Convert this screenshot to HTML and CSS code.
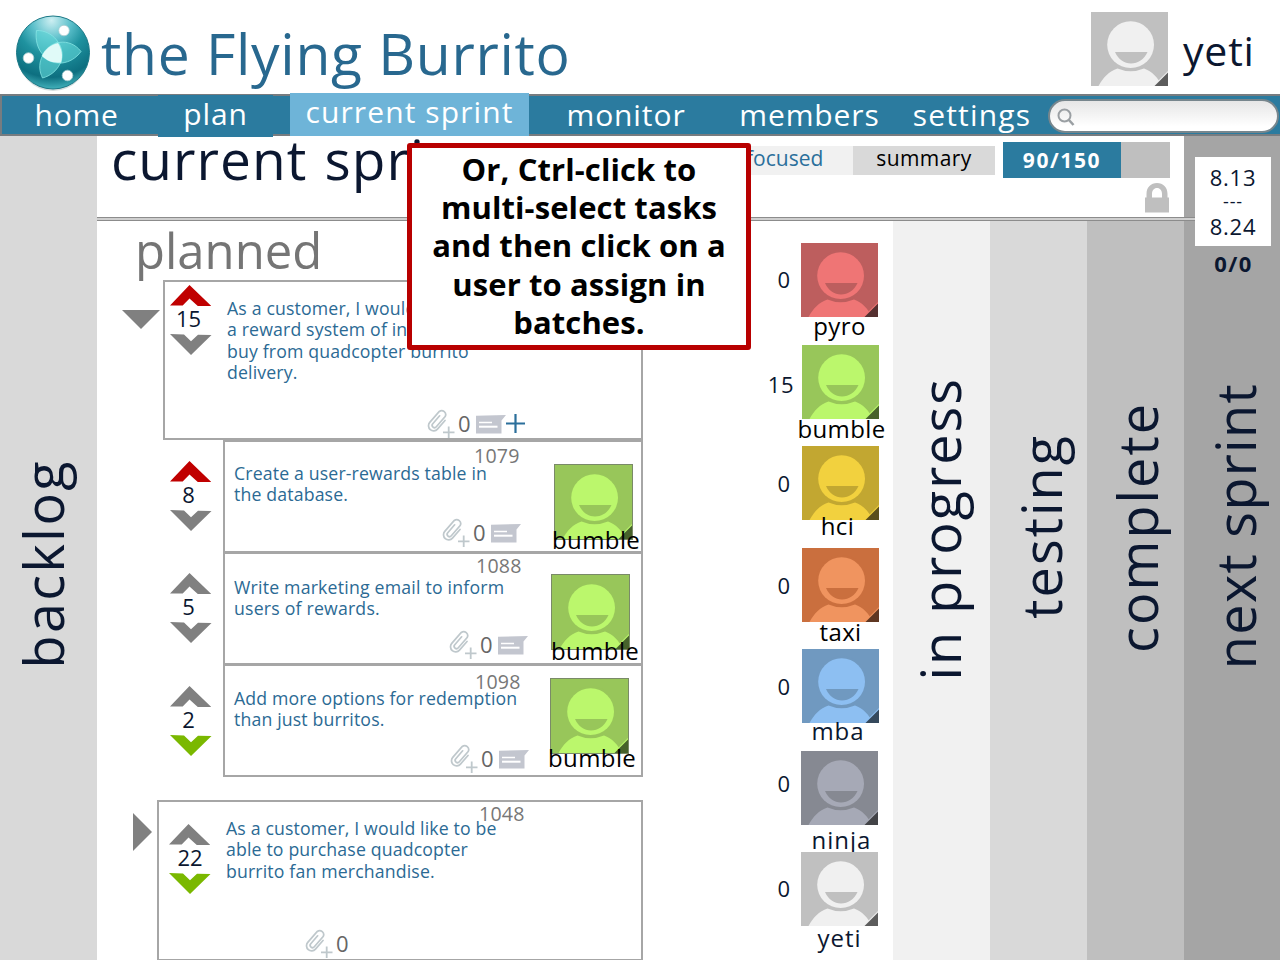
FILE: index.html
```html
<!DOCTYPE html>
<html lang="en">
<head>
<meta charset="utf-8">
<title>the Flying Burrito</title>
<link rel="stylesheet" href="styles.css">
</head>
<body>
<svg class="defs" width="0" height="0" aria-hidden="true">
  <symbol id="avatar" viewBox="0 0 77 74">
    <rect class="av-bg" width="77" height="74"/>
    <path class="av-fg" d="M7.500 74C12 66 18 59 26.500 56.500Q39.500 62 53 56.500C61 59 67 66 71 74Z"/>
    <circle class="av-bg" cx="39.600" cy="32.700" r="25.600"/>
    <circle class="av-fg" cx="39.600" cy="32.700" r="23.400"/>
    <path class="av-bg" d="M24 40H56.500C53 47.500 47 51.500 40 51.500S27.500 47.500 24 40Z"/>
    <path class="av-fg" d="M62 74L77 59V74Z"/>
    <path class="av-corner" d="M63.500 74L77 60.500V74Z"/>
  </symbol>
  <symbol id="up" viewBox="0 0 42 21"><path d="M0 20.500L19.500 0L41.500 21.200H28L19.500 13.500L12.700 20.500Z"/></symbol>
  <symbol id="down" viewBox="0 0 42 21"><path d="M0 0L14 .5L21 7.300L28 .8L41.500 1L21 21Z"/></symbol>
  <symbol id="clip" viewBox="0 0 28 30">
    <g fill="none" stroke="#bfc8cc" stroke-width="1.700" stroke-linecap="round">
      <path transform="translate(10.800 11.800) rotate(41)" d="M5.200 -5V6.500A5.100 5.100 0 0 1 -5 6.500V-8A4 4 0 0 1 2.800 -8V5.500A2.300 2.300 0 0 1 -1.900 5.500V-5"/>
      <path stroke-width="1.800" stroke-linecap="butt" d="M16 23.300H27.500M21.700 17.500V29"/>
    </g>
  </symbol>
  <symbol id="note" viewBox="0 0 30 19">
    <path fill="#c3c6cf" d="M0 .7L30 0L25.500 5.500V18.500H0Z"/>
    <path stroke="#fff" d="M3 7.500H16" stroke-width="1.500"/><path stroke="#fff" d="M3 11.700H21.500" stroke-width="2"/>
  </symbol>
</svg>

<header class="header">
  <svg class="logo" viewBox="0 0 76 78">
    <defs>
      <radialGradient id="ball" cx=".48" cy=".06" r=".95">
        <stop offset="0" stop-color="#cdeff2"/><stop offset=".28" stop-color="#5cc0cb"/><stop offset=".5" stop-color="#1f929f"/><stop offset=".82" stop-color="#0d6f80"/><stop offset="1" stop-color="#45b5be"/>
      </radialGradient>
    </defs>
    <ellipse cx="38" cy="40" rx="36" ry="37" fill="#b9c6c8" opacity=".6"/>
    <circle cx="38" cy="38.500" r="36.500" fill="url(#ball)" stroke="#1b7886" stroke-width="1"/>
    <g fill="#5ed2d4" fill-opacity=".65" stroke="#86e6e4" stroke-width=".8">
      <path d="M21.500 16.500C37 16 51 31 46 49C30 48 19 35 21.500 16.500Z"/>
      <path d="M66 37.500C56 51 39 53 27 42C34 26 55 23 66 37.500Z"/>
      <path d="M27.500 64C21 51 26 36 43 28C53 43 43 60 27.500 64Z"/>
    </g>
    <path fill="#e0faf8" d="M27 42C30 35 36 30.500 43 29C47 35 48 42 46 48.500C38 49.500 32 47 27 42Z"/>
    <g fill="#fff" stroke="#a9cdd1" stroke-width=".8"><circle cx="49" cy="16.500" r="5.300"/><circle cx="13.500" cy="44" r="5.300"/><circle cx="52.500" cy="61.500" r="5.300"/></g>
  </svg>
  <h1 class="brand">the Flying Burrito</h1>
  <svg class="avatar grey header-avatar"><use href="#avatar"/></svg>
  <span class="me">yeti</span>
</header>

<nav class="nav">
  <a class="nav-item home">home</a>
  <a class="nav-item plan">plan</a>
  <a class="nav-item active">current sprint</a>
  <a class="nav-item monitor">monitor</a>
  <a class="nav-item members">members</a>
  <a class="nav-item settings">settings</a>
  <div class="search">
    <svg width="18" height="18" viewBox="0 0 18 18" fill="none" stroke="#9a9fa3"><circle cx="7.500" cy="7.500" r="6" stroke-width="2"/><path d="M11.500 11.500L16.500 17" stroke-width="2.600"/></svg>
  </div>
</nav>

<div class="board">
  <aside class="lane backlog"><span class="vertical">backlog</span></aside>

  <main class="main">
    <div class="toolbar">
      <h2 class="page-title">current sprint</h2>
      <div class="tab focused">focused</div>
      <div class="tab summary">summary</div>
      <div class="capacity">
        <div class="meter"><div class="meter-fill">90/150</div></div>
        <svg class="lock" width="24" height="30" viewBox="0 0 24 30"><path fill="#bfbfbf" fill-rule="evenodd" d="M0 14.500H1.500V11C1.500 4 6 0 12 0S22.500 4 22.500 11V14.500H24V29.500H0ZM7 14.500H17V11C17 7.500 15 5 12 5S7 7.500 7 11Z"/></svg>
      </div>
    </div>
    <div class="rule"></div>

    <div class="columns">
      <section class="planned">
        <div class="stories">
          <h3 class="planned-title">planned</h3>

          <div class="row story-a">
            <div class="gutter"><svg width="38" height="19" viewBox="0 0 38 19"><path fill="#808080" d="M0 0H38L19 19Z"/></svg></div>
            <article class="card">
              <div class="vote"><svg class="red"><use href="#up"/></svg><b>15</b><svg><use href="#down"/></svg></div>
              <div class="body">
                <p>As a customer, I would<br>a reward system of in<br>buy from quadcopter burrito<br>delivery.</p>
                <div class="meta"><svg class="clip"><use href="#clip"/></svg><i>0</i><svg class="note"><use href="#note"/></svg><svg class="plus" viewBox="0 0 19 19"><path stroke="#2b6f9b" stroke-width="2.200" d="M0 9.500H19M9.500 0V19"/></svg></div>
              </div>
            </article>
          </div>

          <div class="row task task-a">
            <div class="vote"><svg class="red"><use href="#up"/></svg><b>8</b><svg><use href="#down"/></svg></div>
            <article class="card">
              <span class="id">1079</span>
              <div class="body">
                <p>Create a user-rewards table in<br>the database.</p>
                <div class="meta"><svg class="clip"><use href="#clip"/></svg><i>0</i><svg class="note"><use href="#note"/></svg></div>
              </div>
              <div class="assignee"><svg class="avatar green"><use href="#avatar"/></svg><span>bumble</span></div>
            </article>
          </div>

          <div class="row task task-b">
            <div class="vote"><svg><use href="#up"/></svg><b>5</b><svg><use href="#down"/></svg></div>
            <article class="card">
              <span class="id">1088</span>
              <div class="body">
                <p>Write marketing email to inform<br>users of rewards.</p>
                <div class="meta"><svg class="clip"><use href="#clip"/></svg><i>0</i><svg class="note"><use href="#note"/></svg></div>
              </div>
              <div class="assignee"><svg class="avatar green"><use href="#avatar"/></svg><span>bumble</span></div>
            </article>
          </div>

          <div class="row task task-c">
            <div class="vote"><svg><use href="#up"/></svg><b>2</b><svg class="lime"><use href="#down"/></svg></div>
            <article class="card">
              <span class="id">1098</span>
              <div class="body">
                <p>Add more options for redemption<br>than just burritos.</p>
                <div class="meta"><svg class="clip"><use href="#clip"/></svg><i>0</i><svg class="note"><use href="#note"/></svg></div>
              </div>
              <div class="assignee"><svg class="avatar green"><use href="#avatar"/></svg><span>bumble</span></div>
            </article>
          </div>

          <div class="row story-b">
            <div class="gutter"><svg width="19" height="38" viewBox="0 0 19 38"><path fill="#808080" d="M0 0V38L19 19Z"/></svg></div>
            <article class="card">
              <span class="id">1048</span>
              <div class="vote"><svg><use href="#up"/></svg><b>22</b><svg class="lime"><use href="#down"/></svg></div>
              <div class="body">
                <p>As a customer, I would like to be<br>able to purchase quadcopter<br>burrito fan merchandise.</p>
                <div class="meta"><svg class="clip"><use href="#clip"/></svg><i>0</i></div>
              </div>
            </article>
          </div>
        </div>

        <ul class="team">
          <li class="m-pyro"><span class="count">0</span><div><svg class="avatar red-av"><use href="#avatar"/></svg><span class="name">pyro</span></div></li>
          <li class="m-bumble"><span class="count">15</span><div><svg class="avatar green"><use href="#avatar"/></svg><span class="name">bumble</span></div></li>
          <li class="m-hci"><span class="count">0</span><div><svg class="avatar yellow"><use href="#avatar"/></svg><span class="name">hci</span></div></li>
          <li class="m-taxi"><span class="count">0</span><div><svg class="avatar orange"><use href="#avatar"/></svg><span class="name">taxi</span></div></li>
          <li class="m-mba"><span class="count">0</span><div><svg class="avatar blue"><use href="#avatar"/></svg><span class="name">mba</span></div></li>
          <li class="m-ninja"><span class="count">0</span><div><svg class="avatar slate"><use href="#avatar"/></svg><span class="name">ninja</span></div></li>
          <li class="m-yeti"><span class="count">0</span><div><svg class="avatar grey"><use href="#avatar"/></svg><span class="name">yeti</span></div></li>
        </ul>
      </section>
      <section class="lane progress"><span class="vertical">in progress</span></section>
      <section class="lane testing"><span class="vertical">testing</span></section>
      <section class="lane complete"><span class="vertical">complete</span></section>
    </div>
  </main>

  <aside class="lane next">
    <div class="dates"><span>8.13</span><span class="dash">---</span><span>8.24</span></div>
    <strong class="ratio">0/0</strong>
    <span class="vertical">next sprint</span>
  </aside>
</div>

<div class="callout">Or, Ctrl-click to<br>multi-select tasks<br>and then click on a<br>user to assign in<br>batches.</div>
</body>
</html>
```
FILE: styles.css
```css
* { box-sizing: border-box; }
body {
  margin: 0;
  width: 1280px;
  height: 960px;
  overflow: hidden;
  position: relative;
  background: #fff;
  color: #0b1730;
  font-family: "Open Sans", "Noto Sans", sans-serif;
  font-weight: 400;
}
h1, h2, h3, p, ul { margin: 0; padding: 0; font-weight: inherit; }
svg { display: block; flex: none; }
.defs { position: absolute; }

/* avatars */
.avatar { width: 77px; height: 74px; }
.av-bg { fill: var(--bg); }
.av-fg { fill: var(--fg); }
.av-corner { fill: var(--corner); }
.grey { --bg: #c0c0c0; --fg: #f0f0f0; --corner: #5c5c5c; }
.green { --bg: #98c65a; --fg: #bbf76c; --corner: #47622b; }
.red-av { --bg: #bd5e5e; --fg: #ef7575; --corner: #553030; }
.yellow { --bg: #c2a731; --fg: #f2d13e; --corner: #5a4e1d; }
.orange { --bg: #ca6f3e; --fg: #f0945f; --corner: #5f3722; }
.blue { --bg: #7099c0; --fg: #8dbff2; --corner: #35495c; }
.slate { --bg: #868992; --fg: #a6a9b6; --corner: #424347; }

/* header */
.header { display: flex; align-items: flex-start; height: 94px; }
.logo { width: 76px; height: 78px; margin: 14px 0 0 15px; }
.brand { margin: 23px auto 0 10px; font-size: 57px; line-height: 60px; letter-spacing: .7px; color: #28688f; white-space: nowrap; }
.header-avatar { margin-top: 12px; }
.me { width: 112px; padding-left: 15px; margin-top: 25px; font-size: 41px; line-height: 50px; letter-spacing: .8px; }

/* navigation */
.nav { display: flex; height: 42px; background: #2b7b9f; border: 2px solid #777c80; border-right: 0; color: #fff; font-size: 30px; line-height: 38px; }
.nav-item { flex: none; text-align: center; white-space: nowrap; }
.home { width: 149px; letter-spacing: .7px; }
.plan { width: 115px; height: 42px; margin: -1px 17px 0 7px; background: #2b7b9f; letter-spacing: .9px; }
.active { width: 239px; height: 43px; margin-top: -3px; line-height: 38px; background: #6eb4d8; letter-spacing: 1.1px; }
.monitor { width: 194px; letter-spacing: .9px; }
.members { width: 173px; letter-spacing: .9px; }
.settings { width: 152px; letter-spacing: 1.2px; }
.search { width: 231px; height: 34px; margin: 3px 0 0; padding: 7px; border: 2px solid #77868d; border-radius: 17px; background: linear-gradient(#e6e6e6, #fff 85%); }

/* board */
.board { display: flex; height: 824px; }
.lane { flex: none; width: 97px; display: flex; flex-direction: column; align-items: flex-start; }
.vertical { margin-top: auto; writing-mode: vertical-rl; transform: rotate(180deg); font-size: 54px; letter-spacing: 2px; white-space: nowrap; }
.backlog { background: #d9d9d9; }
.backlog .vertical { line-height: 86px; margin-bottom: 291px; letter-spacing: 2.4px; }
.progress { background: #f1f1f1; }
.progress .vertical { line-height: 94px; margin-bottom: 279px; }
.testing { background: #d9d9d9; }
.testing .vertical { line-height: 102px; margin-bottom: 341px; }
.complete { background: #bfbfbf; }
.complete .vertical { line-height: 101px; margin-bottom: 307px; }
.next { width: 96px; background: #a5a5a5; }
.next .vertical { line-height: 102px; margin-bottom: 291px; letter-spacing: 1.3px; }
.dates { position: relative; z-index: 2; display: flex; flex-direction: column; align-items: center; width: 76px; height: 89px; margin: 21px 0 0 11px; padding-top: 6px; background: #fff; font-size: 22px; line-height: 28px; letter-spacing: .8px; }
.dates .dash { line-height: 21px; font-size: 18px; }
.ratio { width: 100%; text-align: center; font-size: 22px; line-height: 34px; padding-left: 3px; letter-spacing: 1.5px; }

.main { flex: none; width: 1087px; display: flex; flex-direction: column; }
.toolbar { flex: none; display: flex; align-items: flex-start; height: 81px; }
.page-title { width: 635px; margin: -9px 0 0; padding-left: 14px; font-size: 55px; line-height: 64px; letter-spacing: 1px; word-spacing: 2px; white-space: nowrap; }
.tab { margin-top: 10px; height: 29px; font-size: 21px; line-height: 25px; text-align: center; }
.focused { width: 121px; padding-left: 14px; text-align: left; background: #f1f1f1; color: #2b6f9b; }
.summary { width: 142px; background: #d9d9d9; color: #000; letter-spacing: .4px; }
.capacity { width: 167px; margin: 6px 0 0 8px; }
.meter { height: 36px; background: #bfbfbf; }
.meter-fill { width: 118px; height: 36px; background: #2b7b9f; color: #fff; font-size: 21px; font-weight: 700; line-height: 36px; letter-spacing: 1.6px; text-align: center; }
.lock { margin: 5px 0 0 142px; }
.rule { flex: none; position: relative; z-index: 1; width: 1098px; height: 4px; border: 1px solid #8c8c8c; border-width: 1px 0; background: #cfcfcf; }
.columns { flex: 1; min-height: 0; display: flex; margin-top: -1px; }

/* planned column */
.planned { width: 796px; flex: none; display: flex; }
.stories { width: 660px; flex: none; }
.planned-title { height: 60px; padding-left: 38px; font-size: 49px; line-height: 60px; color: #757575; }
.row { display: flex; align-items: flex-start; }
.gutter { flex: none; }
.card { position: relative; display: flex; background: #fff; border: 2px solid #a6a6a6; }
.story-a .gutter { width: 66px; padding: 30px 0 0 25px; }
.story-a .card { width: 480px; height: 160px; }
.story-b { margin-top: 23px; }
.story-b .gutter { width: 60px; padding: 13px 0 0 36px; }
.story-b .card { width: 486px; height: 161px; }
.vote { flex: none; width: 42px; }
.vote svg { width: 42px; height: 21px; fill: #808080; }
.vote b { display: block; margin-bottom: 4px; padding-right: 5px; font-size: 22px; line-height: 24px; font-weight: inherit; text-align: center; }
.vote .red { fill: #c00000; }
.vote .lime { fill: #7ab800; }
.story-a .vote { margin: 3px 15px 0 5px; }
.story-b .vote { margin: 22px 15px 0 10px; }
.story-b .vote b { padding-right: 0; }
.task .vote { margin: 21px 11px 0 73px; }
.task-c .vote { margin-top: 22px; }
.task .card { width: 420px; height: 113px; margin-bottom: -1px; }
.task-c .card { height: 113px; margin: 0; }
.body { display: flex; flex-direction: column; }
.body p { font-size: 17.7px; line-height: 21.4px; color: #2b6a94; white-space: nowrap; letter-spacing: .15px; }
.story-a .body, .story-b .body { padding-top: 16px; }
.task .body { padding: 21px 0 0 9px; }
.task-b .body { padding-top: 23px; }
.task-c .body { padding-top: 22px; }
.task-b .body p { letter-spacing: .2px; }
.meta { display: flex; margin-top: auto; color: #666; }
.meta i { width: 14px; margin: 0 4px 0 3px; font-style: normal; font-size: 22px; line-height: 29px; }
.clip { width: 28px; height: 30px; }
.note { width: 30px; height: 19px; margin-top: 6px; }
.plus { width: 19px; height: 19px; margin-top: 5px; }
.story-a .meta { margin: auto 0 -1px 200px; }
.task-a .meta { margin: auto 0 3px 208px; }
.task-b .meta { margin: auto 0 3px 215px; }
.task-c .meta { margin: auto 0 1px 216px; }
.story-b .meta { margin: auto 0 0 79px; }
.id { position: absolute; top: 1px; left: 249px; font-size: 19.6px; line-height: 26px; color: #777; letter-spacing: .2px; }
.task-b .id { left: 251px; top: -1px; }
.task-c .id { left: 250px; top: 3px; }
.story-b .id { left: 320px; top: -1px; }
.assignee { position: absolute; top: 23px; left: 330px; width: 90px; }
.assignee .avatar { box-shadow: 0 0 0 1px #7a8a68; }
.assignee span { position: absolute; left: -3px; top: 59px; font-size: 24px; line-height: 32px; color: #000; letter-spacing: .4px; }
.task-b .assignee { top: 21px; left: 327px; }
.task-b .assignee span { left: -1px; top: 60px; }
.task-c .assignee { top: 13px; left: 326px; }
.task-c .assignee span { top: 63px; }

/* team */
.team { width: 136px; flex: none; padding-top: 23px; list-style: none; }
.team li { display: flex; height: 101.5px; }
.team li div { display: flex; flex-direction: column; align-items: center; width: 77px; }
.count { width: 33px; margin-right: 11px; padding-top: 22px; text-align: right; font-size: 22px; line-height: 28px; }
.name { margin-top: -7px; font-size: 24px; line-height: 32px; color: #000; white-space: nowrap; letter-spacing: .4px; }
.m-bumble .count, .m-hci .count, .m-taxi .count, .m-mba .count { margin-right: 12px; }
.m-hci .count, .m-taxi .count, .m-mba .count { padding-top: 23px; }
.m-bumble .count { width: 37px; margin-right: 8px; padding-top: 25px; letter-spacing: .5px; }
.m-bumble .name { margin: -6px 0 0 2px; }
.m-hci .name { margin: -10px 6px 0 0; }
.m-taxi .name { margin-top: -6px; }
.m-mba .name { margin: -8px 5px 0 0; }
.m-ninja .name { margin: -1px 0 0 4px; }
.m-yeti .name { margin-top: -4px; }
.m-ninja .count { padding-top: 18px; }
.m-ninja .name, .m-yeti .name, .m-mba .name { color: #0b1730; letter-spacing: 1px; }

/* callout */
.callout { position: absolute; z-index: 3; left: 407px; top: 143px; width: 344px; height: 207px; padding-top: 2px; border: 5px solid #b80000; border-radius: 3px; background: #fff; color: #000; font-size: 31px; font-weight: 700; line-height: 38.2px; letter-spacing: .1px; text-align: center; white-space: nowrap; }
```
